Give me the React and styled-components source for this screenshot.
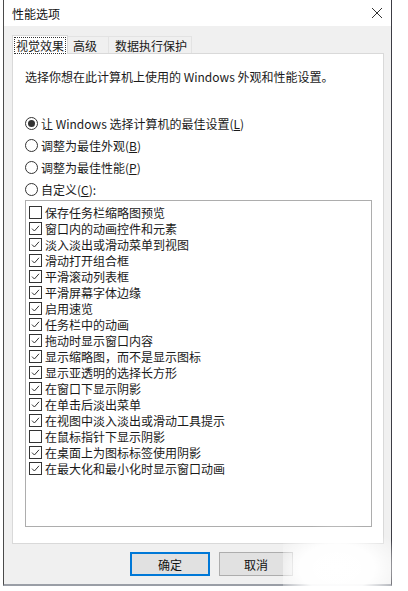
import React from 'react';
import styled, { createGlobalStyle } from 'styled-components';

const GlobalStyle = createGlobalStyle`
  html, body {
    margin: 0;
    padding: 0;
    background: #ffffff;
  }
  body {
    font-family: "Noto Sans CJK SC", "Noto Sans", sans-serif;
    font-size: 12px;
    color: #1a1a1a;
  }
`;

const Page = styled.div`
  width: 408px;
  height: 591px;
  display: flex;
  background: #ffffff;
  overflow: hidden;
`;

const Window = styled.div`
  margin-left: 3px;
  width: 389px;
  height: 586px;
  border-left: 1px solid #4a4a4a;
  border-right: 1px solid #3c3c44;
  border-bottom: 2px solid #9a9ea6;
  box-sizing: border-box;
  display: flex;
  flex-direction: column;
  background: #f0f0f0;
  position: relative;
`;

const TitleBar = styled.div`
  height: 28px;
  background: #ffffff;
  display: flex;
  align-items: center;
  justify-content: space-between;
  padding: 0 8px 0 8px;
`;

const Title = styled.span`
  font-size: 12px;
  color: #111;
  padding-top: 1px;
`;

const Close = styled.svg`
  width: 12px;
  height: 12px;
  margin-right: 0;
`;

const Body = styled.div`
  flex: 1;
  display: flex;
  flex-direction: column;
  padding: 9px 7px 0 8px;
`;

const Tabs = styled.div`
  display: flex;
  height: 18px;
  align-items: flex-end;
`;

const Tab = styled.div`
  height: ${(p) => (p.$active ? '19px' : '17px')};
  box-sizing: border-box;
  padding: 0 ${(p) => p.$pr}px 0 ${(p) => p.$pl}px;
  display: flex;
  align-items: center;
  background: ${(p) => (p.$active ? '#ffffff' : '#f0f0f0')};
  border: 1px solid ${(p) => (p.$active ? '#d9d9d9' : '#e3e3e3')};
  border-bottom: none;
  margin-left: ${(p) => (p.$active ? '0' : '-1px')};
  position: relative;
  z-index: ${(p) => (p.$active ? 2 : 1)};
  margin-bottom: ${(p) => (p.$active ? '-1px' : '0')};
`;

const TabLabel = styled.span`
  padding: 0 1px;
  line-height: 15px;
  border: 1px dotted ${(p) => (p.$focus ? '#333' : 'transparent')};
`;

const Panel = styled.div`
  background: #ffffff;
  border: 1px solid #d9d9d9;
  height: 491px;
  box-sizing: border-box;
  padding: 14px 12px 0 12px;
  display: flex;
  flex-direction: column;
`;

const Intro = styled.div`
  line-height: 18px;
  margin-bottom: 26px;
`;

const RadioRow = styled.label`
  display: flex;
  align-items: center;
  gap: 3px;
  height: 22px;
`;

const RadioCircle = styled.span`
  width: 11px;
  height: 11px;
  border-radius: 50%;
  border: 1px solid #333;
  display: flex;
  align-items: center;
  justify-content: center;
  flex: none;

  &::after {
    content: '';
    width: 7px;
    height: 7px;
    border-radius: 50%;
    background: ${(p) => (p.$on ? '#333' : 'transparent')};
  }
`;

const Key = styled.span`
  text-decoration: underline;
`;

const ListBox = styled.div`
  width: 347px;
  height: 327px;
  box-sizing: border-box;
  border: 1px solid #adadad;
  padding: 3px 0 0 3px;
  display: flex;
  flex-direction: column;
`;

const CheckRow = styled.div`
  display: flex;
  align-items: center;
  gap: 3px;
  height: 16px;
`;

const CheckBox = styled.span`
  width: 11px;
  height: 11px;
  border: 1px solid #333;
  background: #fff;
  display: flex;
  align-items: center;
  justify-content: center;
  flex: none;
`;

const Footer = styled.div`
  height: 40px;
  display: flex;
  align-items: center;
  padding-left: 118px;
  gap: 9px;
`;

const Button = styled.button`
  width: ${(p) => p.$w}px;
  height: 24px;
  font-family: inherit;
  font-size: 12px;
  color: #111;
  background: #e1e1e1;
  border: ${(p) => (p.$primary ? '2px solid #0078d7' : '1px solid #adadad')};
  padding: 0;
  margin: 0;
`;

const Glare = styled.div`
  position: absolute;
  right: -12px;
  bottom: -2px;
  width: 120px;
  height: 60px;
  pointer-events: none;
  background: radial-gradient(ellipse at 45% 70%, rgba(255,255,255,1) 0%, rgba(255,255,255,0.95) 40%, rgba(255,255,255,0) 75%);
`;

const items = [
  ['保存任务栏缩略图预览', false],
  ['窗口内的动画控件和元素', true],
  ['淡入淡出或滑动菜单到视图', true],
  ['滑动打开组合框', true],
  ['平滑滚动列表框', true],
  ['平滑屏幕字体边缘', true],
  ['启用速览', true],
  ['任务栏中的动画', true],
  ['拖动时显示窗口内容', true],
  ['显示缩略图，而不是显示图标', true],
  ['显示亚透明的选择长方形', true],
  ['在窗口下显示阴影', true],
  ['在单击后淡出菜单', true],
  ['在视图中淡入淡出或滑动工具提示', true],
  ['在鼠标指针下显示阴影', false],
  ['在桌面上为图标标签使用阴影', true],
  ['在最大化和最小化时显示窗口动画', true],
];

const Tick = () => (
  <svg width="9" height="9" viewBox="0 0 9 9">
    <path d="M1 4.6 L3.4 7 L8 1.8" fill="none" stroke="#333" strokeWidth="1" />
  </svg>
);

const Radio = ({ on, children }) => (
  <RadioRow>
    <RadioCircle $on={on} />
    <span>{children}</span>
  </RadioRow>
);

export default function App() {
  return (
    <Page>
      <GlobalStyle />
      <Window>
        <TitleBar>
          <Title>性能选项</Title>
          <Close viewBox="0 0 12 12">
            <path d="M1 1 L11 11 M11 1 L1 11" stroke="#333" strokeWidth="1" />
          </Close>
        </TitleBar>
        <Body>
          <Tabs>
            <Tab $active $pl={1} $pr={1}>
              <TabLabel $focus>视觉效果</TabLabel>
            </Tab>
            <Tab $pl={3} $pr={9}>
              <TabLabel>高级</TabLabel>
            </Tab>
            <Tab $pl={4} $pr={2}>
              <TabLabel>数据执行保护</TabLabel>
            </Tab>
          </Tabs>
          <Panel>
            <Intro>选择你想在此计算机上使用的 Windows 外观和性能设置。</Intro>
            <Radio on>
              让 Windows 选择计算机的最佳设置(<Key>L</Key>)
            </Radio>
            <Radio>
              调整为最佳外观(<Key>B</Key>)
            </Radio>
            <Radio>
              调整为最佳性能(<Key>P</Key>)
            </Radio>
            <Radio>
              自定义(<Key>C</Key>):
            </Radio>
            <ListBox>
              {items.map(([label, on]) => (
                <CheckRow key={label}>
                  <CheckBox>{on && <Tick />}</CheckBox>
                  <span>{label}</span>
                </CheckRow>
              ))}
            </ListBox>
          </Panel>
          <Footer>
            <Button $primary $w={80}>确定</Button>
            <Button $w={74}>取消</Button>
          </Footer>
        </Body>
        <Glare />
      </Window>
    </Page>
  );
}
